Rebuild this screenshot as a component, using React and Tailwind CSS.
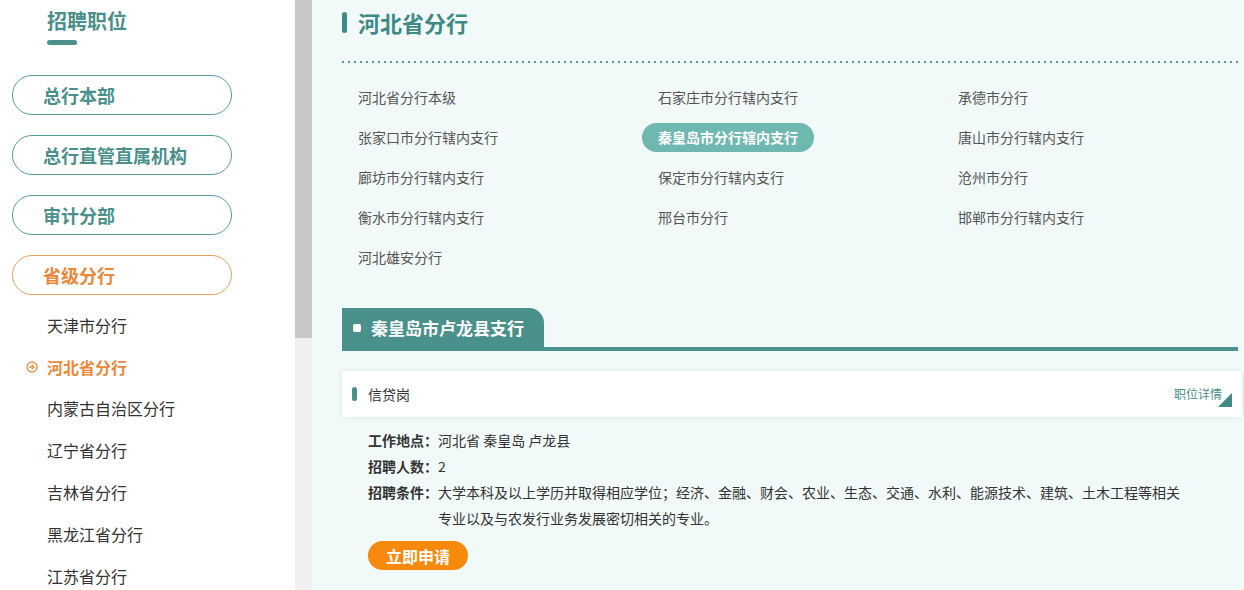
import React from 'react';

const pills = ['总行本部', '总行直管直属机构', '审计分部'];

const provinces = ['天津市分行', '河北省分行', '内蒙古自治区分行', '辽宁省分行', '吉林省分行', '黑龙江省分行', '江苏省分行'];

const branches = [
  '河北省分行本级', '石家庄市分行辖内支行', '承德市分行',
  '张家口市分行辖内支行', '秦皇岛市分行辖内支行', '唐山市分行辖内支行',
  '廊坊市分行辖内支行', '保定市分行辖内支行', '沧州市分行',
  '衡水市分行辖内支行', '邢台市分行', '邯郸市分行辖内支行',
  '河北雄安分行',
];

function CircleArrow() {
  return (
    <svg width="12" height="12" viewBox="0 0 12 12" fill="none" stroke="#e8924a" strokeWidth="1.3">
      <circle cx="6" cy="6" r="5" />
      <path d="M3.5 6h4.5M6 4l2 2-2 2" strokeLinecap="round" strokeLinejoin="round" />
    </svg>
  );
}

export default function App() {
  return (
    <div className="flex h-[590px] overflow-hidden font-['Noto_Sans_CJK_SC','Noto_Sans',sans-serif]">
      {/* Sidebar */}
      <aside className="w-[295px] shrink-0 bg-white">
        <div className="pl-[47px] pt-[7px]">
          <h2 className="text-[20px] leading-[28px] font-bold text-[#4a8f8a]">招聘职位</h2>
          <div className="mt-[5px] w-[30px] h-[5px] rounded-full bg-[#4a8f8a]" />
        </div>
        <div className="mt-[30px] pl-[12px] flex flex-col gap-[20px]">
          {pills.map((p) => (
            <div key={p} className="w-[220px] h-[40px] rounded-full border border-[#5a9a95] flex items-center pl-[30px] text-[18px] font-bold text-[#4a8f8a]">
              {p}
            </div>
          ))}
          <div className="w-[220px] h-[40px] rounded-full border border-[#e8a060] flex items-center pl-[30px] text-[18px] font-bold text-[#e8883a]">
            省级分行
          </div>
        </div>
        <ul className="mt-[9px]">
          {provinces.map((p) => {
            const active = p === '河北省分行';
            return (
              <li key={p} className="h-[41.8px] flex items-center">
                <span className="w-[47px] flex justify-end pr-[9px]">{active && <CircleArrow />}</span>
                <span className={active ? 'text-[16px] font-bold text-[#e8883a]' : 'text-[16px] text-[#333]'}>{p}</span>
              </li>
            );
          })}
        </ul>
      </aside>

      {/* Scrollbar */}
      <div className="w-[17px] shrink-0 bg-[#f0f0f0]">
        <div className="h-[338px] bg-[#c8c8c8]" />
      </div>

      {/* Main */}
      <main className="flex-1 bg-[#f2f9f9] pl-[30px] pr-[2px]">
        <div className="flex items-center gap-[11px] pt-[10px]">
          <div className="w-[5px] h-[21px] rounded-full bg-[#3f8a85]" />
          <h1 className="text-[22px] leading-[24px] font-bold text-[#3f8a85]">河北省分行</h1>
        </div>
        <div className="mt-[27px] mr-[2px] h-[2px] bg-[linear-gradient(to_right,#5a9a95_2px,transparent_2px)] bg-[length:6px_2px]" />

        <div className="mt-[14px] grid grid-cols-[300px_300px_300px]">
          {branches.map((b) => {
            const active = b === '秦皇岛市分行辖内支行';
            return (
              <div key={b} className="h-[40px] flex items-center">
                <span className={active
                  ? 'h-[29px] px-[16px] rounded-full bg-[#6fb8b0] text-white font-bold text-[14px] flex items-center'
                  : 'px-[16px] text-[14px] text-[#555]'}>
                  {b}
                </span>
              </div>
            );
          })}
        </div>

        <div className="mt-[31px] mr-[4px] border-b-4 border-[#4a918b] flex">
          <div className="h-[39px] w-[202px] rounded-tr-[15px] bg-[#4a918b] flex items-center pl-[11px] gap-[10px]">
            <span className="w-[8px] h-[8px] rounded-[2px] bg-white" />
            <span className="text-[17px] font-bold text-white">秦皇岛市卢龙县支行</span>
          </div>
        </div>

        <div className="mt-[20px] h-[46px] bg-white shadow-[0_0_6px_rgba(0,0,0,0.08)] flex items-center relative">
          <div className="ml-[10px] w-[5px] h-[14px] rounded-full bg-[#4a8f8a]" />
          <span className="ml-[11px] text-[14px] text-[#333]">信贷岗</span>
          <span className="ml-auto mr-[20px] text-[12px] text-[#4a8f8a]">职位详情</span>
          <span className="absolute right-[10px] bottom-[10px] w-0 h-0 border-l-[14px] border-l-transparent border-b-[14px] border-b-[#3f8a85]" />
        </div>

        <div className="pl-[26px] pt-[10px] text-[14px] leading-[26px] text-[#333]">
          <div className="flex">
            <span className="w-[70px] shrink-0 font-bold">工作地点：</span>
            <span>河北省 秦皇岛 卢龙县</span>
          </div>
          <div className="flex">
            <span className="w-[70px] shrink-0 font-bold">招聘人数：</span>
            <span>2</span>
          </div>
          <div className="flex">
            <span className="w-[70px] shrink-0 font-bold">招聘条件：</span>
            <span className="w-[750px]">大学本科及以上学历并取得相应学位；经济、金融、财会、农业、生态、交通、水利、能源技术、建筑、土木工程等相关专业以及与农发行业务发展密切相关的专业。</span>
          </div>
          <button className="mt-[10px] w-[100px] h-[29px] rounded-full bg-[#f7890c] text-white text-[16px] font-bold flex items-center justify-center">
            立即申请
          </button>
        </div>
      </main>
    </div>
  );
}
